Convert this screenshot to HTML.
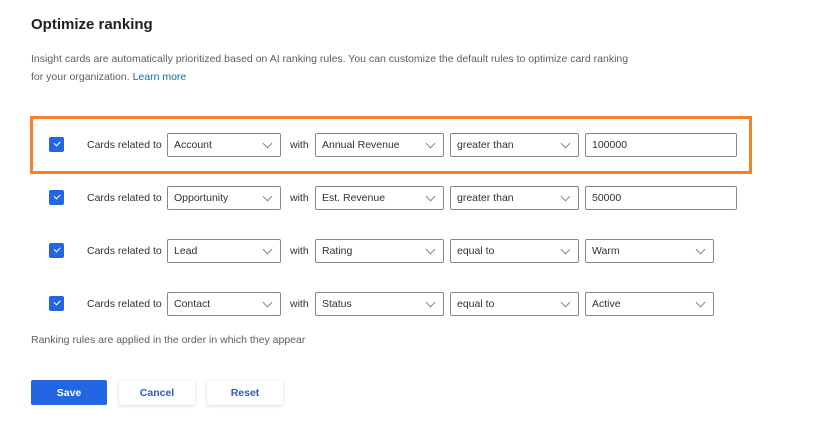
<!DOCTYPE html>
<html><head><style>
body{margin:0;width:820px;height:432px;background:#fff;font-family:"Liberation Sans",sans-serif;color:#323130;position:relative;overflow:hidden}
.a{position:absolute}
h1{position:absolute;left:31px;top:16px;margin:0;font-size:15px;font-weight:bold;color:#201f1e}
.desc{left:31px;top:50px;font-size:10.5px;line-height:18px;color:#605e5c;width:605px}
.desc span{color:#0f6cbd}
.cb{position:absolute;width:15px;height:15px;background:#2266e3;border-radius:2px}
.cb:after{content:"";position:absolute;left:4.5px;top:4px;width:5px;height:2.5px;border-left:1px solid #fff;border-bottom:1px solid #fff;transform:rotate(-45deg)}
.lbl{position:absolute;font-size:10.5px;color:#323130}
.sel{position:absolute;height:24px;border:1px solid #8a8886;border-radius:2px;box-sizing:border-box;font-size:10.5px;line-height:23px;padding-left:6px;color:#323130;background:#fff}
.sel.d:after{content:"";position:absolute;right:9px;top:6px;width:6px;height:6px;border-right:1px solid #8a8886;border-bottom:1px solid #8a8886;transform:rotate(45deg)}
.btn{position:absolute;top:380px;width:76px;height:25px;font-size:10.5px;font-weight:bold;text-align:center;line-height:26px;border-radius:2px;box-sizing:border-box}
</style></head><body>
<h1>Optimize ranking</h1>
<div class="a desc">Insight cards are automatically prioritized based on AI ranking rules. You can customize the default rules to optimize card ranking for your organization. <span>Learn more</span></div>
<div class="a" style="left:30px;top:116px;width:722px;height:58px;border:3px solid #f7802a;box-sizing:border-box"></div>

<div class="cb" style="left:49px;top:137px"></div>
<div class="lbl" style="left:87px;top:139px">Cards related to</div>
<div class="sel d" style="left:167px;top:133px;width:114px">Account</div>
<div class="lbl" style="left:290px;top:139px">with</div>
<div class="sel d" style="left:315px;top:133px;width:129px">Annual Revenue</div>
<div class="sel d" style="left:450px;top:133px;width:129px">greater than</div>
<div class="sel" style="left:585px;top:133px;width:152px">100000</div>

<div class="cb" style="left:49px;top:190px"></div>
<div class="lbl" style="left:87px;top:192px">Cards related to</div>
<div class="sel d" style="left:167px;top:186px;width:114px">Opportunity</div>
<div class="lbl" style="left:290px;top:192px">with</div>
<div class="sel d" style="left:315px;top:186px;width:129px">Est. Revenue</div>
<div class="sel d" style="left:450px;top:186px;width:129px">greater than</div>
<div class="sel" style="left:585px;top:186px;width:152px">50000</div>

<div class="cb" style="left:49px;top:243px"></div>
<div class="lbl" style="left:87px;top:245px">Cards related to</div>
<div class="sel d" style="left:167px;top:239px;width:114px">Lead</div>
<div class="lbl" style="left:290px;top:245px">with</div>
<div class="sel d" style="left:315px;top:239px;width:129px">Rating</div>
<div class="sel d" style="left:450px;top:239px;width:129px">equal to</div>
<div class="sel d" style="left:585px;top:239px;width:129px">Warm</div>

<div class="cb" style="left:49px;top:296px"></div>
<div class="lbl" style="left:87px;top:298px">Cards related to</div>
<div class="sel d" style="left:167px;top:292px;width:114px">Contact</div>
<div class="lbl" style="left:290px;top:298px">with</div>
<div class="sel d" style="left:315px;top:292px;width:129px">Status</div>
<div class="sel d" style="left:450px;top:292px;width:129px">equal to</div>
<div class="sel d" style="left:585px;top:292px;width:129px">Active</div>

<div class="lbl" style="left:31px;top:334px;color:#605e5c">Ranking rules are applied in the order in which they appear</div>

<div class="btn" style="left:31px;background:#2266e3;color:#fff">Save</div>
<div class="btn" style="left:119px;color:#2b5cd1;background:#fff;box-shadow:0 1px 3px rgba(0,0,0,.15)">Cancel</div>
<div class="btn" style="left:207px;color:#2b5cd1;background:#fff;box-shadow:0 1px 3px rgba(0,0,0,.15)">Reset</div>
</body></html>
